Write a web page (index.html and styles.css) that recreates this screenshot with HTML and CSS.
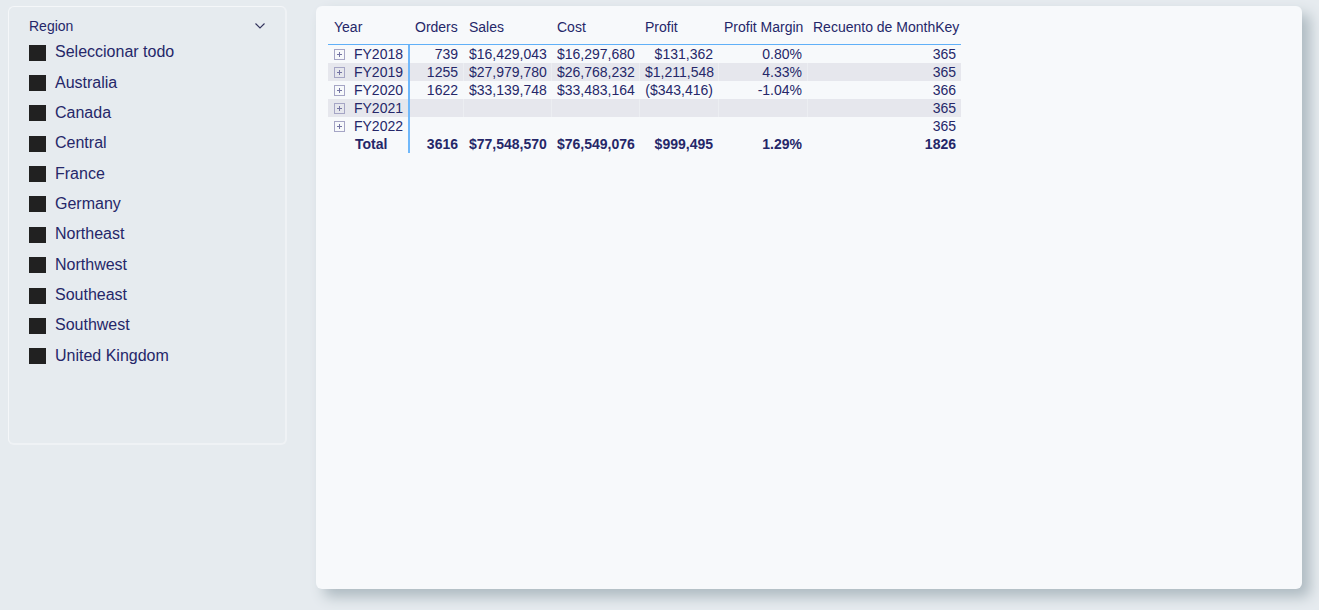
FILE: index.html
```html
<!DOCTYPE html>
<html lang="es">
<head>
<meta charset="utf-8">
<meta name="viewport" content="width=device-width, initial-scale=1">
<title>Sales by Year</title>
<link rel="stylesheet" href="styles.css">
</head>
<body>
<main class="report">
  <section class="slicer" aria-labelledby="slicer-title">
    <header class="slicer-head">
      <h2 class="slicer-title" id="slicer-title">Region</h2>
      <button class="slicer-toggle" type="button" aria-label="Region">
        <svg width="12" height="8" viewBox="0 0 12 8" fill="none" stroke="#33335c" stroke-width="1.1"><path d="M1.5 1.5 6 6 10.5 1.5"/></svg>
      </button>
    </header>
    <div class="options">
      <label class="option"><input class="box" type="checkbox">Seleccionar todo</label>
      <label class="option"><input class="box" type="checkbox">Australia</label>
      <label class="option"><input class="box" type="checkbox">Canada</label>
      <label class="option"><input class="box" type="checkbox">Central</label>
      <label class="option"><input class="box" type="checkbox">France</label>
      <label class="option"><input class="box" type="checkbox">Germany</label>
      <label class="option"><input class="box" type="checkbox">Northeast</label>
      <label class="option"><input class="box" type="checkbox">Northwest</label>
      <label class="option"><input class="box" type="checkbox">Southeast</label>
      <label class="option"><input class="box" type="checkbox">Southwest</label>
      <label class="option"><input class="box" type="checkbox">United Kingdom</label>
    </div>
  </section>
  <section class="card">
    <table class="matrix">
      <colgroup>
        <col class="c-year"><col class="c-orders"><col class="c-money"><col class="c-money"><col class="c-profit"><col class="c-margin"><col class="c-count">
      </colgroup>
      <thead>
        <tr><th scope="col">Year</th><th scope="col">Orders</th><th scope="col">Sales</th><th scope="col">Cost</th><th scope="col">Profit</th><th scope="col">Profit Margin</th><th scope="col">Recuento de MonthKey</th></tr>
      </thead>
      <tbody>
        <tr><th scope="row"><div class="year"><button class="expand" type="button" aria-label="FY2018"></button>FY2018</div></th><td>739</td><td>$16,429,043</td><td>$16,297,680</td><td>$131,362</td><td>0.80%</td><td>365</td></tr>
        <tr><th scope="row"><div class="year"><button class="expand" type="button" aria-label="FY2019"></button>FY2019</div></th><td>1255</td><td>$27,979,780</td><td>$26,768,232</td><td>$1,211,548</td><td>4.33%</td><td>365</td></tr>
        <tr><th scope="row"><div class="year"><button class="expand" type="button" aria-label="FY2020"></button>FY2020</div></th><td>1622</td><td>$33,139,748</td><td>$33,483,164</td><td>($343,416)</td><td>-1.04%</td><td>366</td></tr>
        <tr><th scope="row"><div class="year"><button class="expand" type="button" aria-label="FY2021"></button>FY2021</div></th><td></td><td></td><td></td><td></td><td></td><td>365</td></tr>
        <tr><th scope="row"><div class="year"><button class="expand" type="button" aria-label="FY2022"></button>FY2022</div></th><td></td><td></td><td></td><td></td><td></td><td>365</td></tr>
      </tbody>
      <tfoot>
        <tr><th scope="row">Total</th><td>3616</td><td>$77,548,570</td><td>$76,549,076</td><td>$999,495</td><td>1.29%</td><td>1826</td></tr>
      </tfoot>
    </table>
  </section>
</main>
</body>
</html>
```

FILE: styles.css
```css
* { box-sizing: border-box; }

body {
  margin: 0;
  background: #e6ebef;
  color: #252769;
  font-family: "Liberation Sans", Arial, sans-serif;
  font-size: 14px;
}

.report {
  display: flex;
  align-items: flex-start;
  gap: 29px;
  min-height: 100vh;
  padding: 6px 17px 21px 8px;
}

/* Region slicer */
.slicer {
  flex: 0 0 279px;
  padding: 10px 19px 72px 20px;
  border: 1px solid #f5f7f9;
  border-right-width: 2px;
  border-bottom-width: 2px;
  border-right-color: #eff2f5;
  border-bottom-color: #eff2f5;
  border-radius: 6px;
}

.slicer-head {
  display: flex;
  align-items: center;
  justify-content: space-between;
  height: 18px;
}

.slicer-title {
  margin: 0;
  font-size: 14px;
  font-weight: normal;
}

.slicer-toggle {
  display: flex;
  padding: 0;
  border: 0;
  background: none;
}

.options {
  display: grid;
  grid-auto-rows: 1fr;
  height: 334px;
  margin-top: 2px;
}

.option {
  display: flex;
  align-items: center;
  gap: 9px;
  font-size: 16px;
}

.box {
  appearance: none;
  width: 17px;
  height: 16px;
  margin: 1px 0 0;
  background: #212121;
}

/* Matrix card */
.card {
  flex: 1;
  align-self: stretch;
  padding: 5px 12px;
  border-radius: 6px;
  background: #f7f9fb;
  box-shadow: 8px 8px 14px #aebac1;
}

.matrix {
  table-layout: fixed;
  width: 633px;
  border-collapse: separate;
  border-spacing: 0;
  line-height: 17px;
}

.c-year { width: 82px; }
.c-orders { width: 54px; }
.c-money { width: 88px; }
.c-profit { width: 79px; }
.c-margin { width: 89px; }
.c-count { width: 153px; }

.matrix th,
.matrix td {
  height: 18px;
  padding: 0 5px;
  font-weight: normal;
  text-align: right;
  white-space: nowrap;
}

.matrix thead th {
  height: 34px;
  padding: 0 0 1px 5px;
  border-bottom: 1px solid #60b0f8;
  text-align: left;
}

.matrix thead th:first-child,
.matrix tbody th,
.matrix tfoot th {
  padding-left: 6px;
}

.matrix tbody th,
.matrix tfoot th {
  border-right: 2px solid #70b8fa;
  text-align: left;
}

.matrix tbody td {
  border-right: 1px solid #f7f9fb;
}

.matrix tbody tr:nth-child(even) td { border-right-color: #eceef2; }
.matrix tbody td:last-child { border-right: 0; }
.matrix tbody tr:nth-child(even) { background: #e6e7ed; }

.matrix tfoot th,
.matrix tfoot td { font-weight: bold; }

.matrix tfoot td { padding-right: 6px; }
.matrix tfoot td:last-child { padding-right: 5px; }

.matrix tfoot th { padding-left: 27px; }

.year {
  display: flex;
  align-items: center;
  gap: 9px;
}

.expand {
  width: 11px;
  height: 11px;
  padding: 0;
  border: 1px solid #a5a5c5;
  background:
    linear-gradient(#7474a3, #7474a3) center / 5px 1px no-repeat,
    linear-gradient(#7474a3, #7474a3) center / 1px 5px no-repeat;
}
```
